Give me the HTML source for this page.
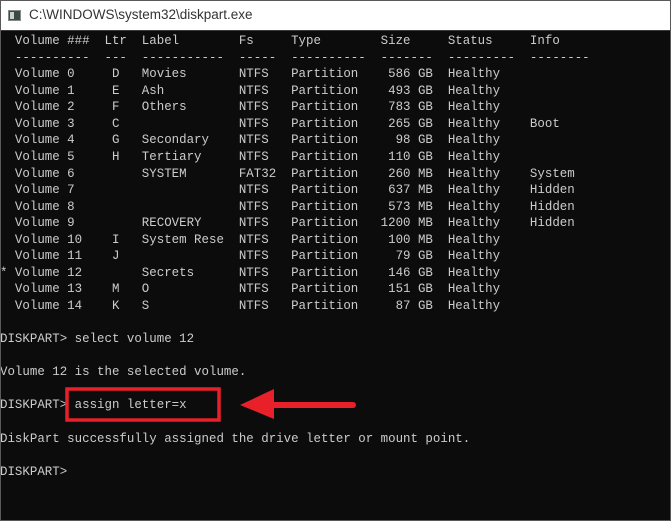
<!DOCTYPE html>
<html><head><meta charset="utf-8"><style>
html,body{margin:0;padding:0}
body{width:671px;height:521px;overflow:hidden;background:#0c0c0c;position:relative}
.frame{position:absolute;left:0;top:0;width:669px;height:519px;border:1px solid #5a5a5a;}
.title{position:absolute;left:0;top:0;width:671px;height:31px;background:#fff;border-bottom:1px solid #3a3a3a;box-sizing:border-box}
.title span{position:absolute;left:29px;top:7px;font:13.5px "Liberation Sans",sans-serif;color:#333}
.icon{position:absolute;left:8px;top:10px;width:13px;height:11px;background:#3a4a44;border:1px solid #888;box-sizing:border-box}
.icon:after{content:"";position:absolute;left:1px;top:1px;width:4px;height:7px;background:#c8d0cc}
pre{position:absolute;left:0;top:33px;margin:0;font-family:"Liberation Mono",monospace;font-size:12.44px;line-height:16.57px;color:#cccccc}
svg{position:absolute;left:0;top:0}
</style></head><body>
<div class="title"><div class="icon"></div><span>C:\WINDOWS\system32\diskpart.exe</span></div>
<pre>  Volume ###  Ltr  Label        Fs     Type        Size     Status     Info
  ----------  ---  -----------  -----  ----------  -------  ---------  --------
  Volume 0     D   Movies       NTFS   Partition    586 GB  Healthy
  Volume 1     E   Ash          NTFS   Partition    493 GB  Healthy
  Volume 2     F   Others       NTFS   Partition    783 GB  Healthy
  Volume 3     C                NTFS   Partition    265 GB  Healthy    Boot
  Volume 4     G   Secondary    NTFS   Partition     98 GB  Healthy
  Volume 5     H   Tertiary     NTFS   Partition    110 GB  Healthy
  Volume 6         SYSTEM       FAT32  Partition    260 MB  Healthy    System
  Volume 7                      NTFS   Partition    637 MB  Healthy    Hidden
  Volume 8                      NTFS   Partition    573 MB  Healthy    Hidden
  Volume 9         RECOVERY     NTFS   Partition   1200 MB  Healthy    Hidden
  Volume 10    I   System Rese  NTFS   Partition    100 MB  Healthy
  Volume 11    J                NTFS   Partition     79 GB  Healthy
* Volume 12        Secrets      NTFS   Partition    146 GB  Healthy
  Volume 13    M   O            NTFS   Partition    151 GB  Healthy
  Volume 14    K   S            NTFS   Partition     87 GB  Healthy

DISKPART&gt; select volume 12

Volume 12 is the selected volume.

DISKPART&gt; assign letter=x

DiskPart successfully assigned the drive letter or mount point.

DISKPART&gt;</pre>
<svg width="671" height="521">
<rect x="67" y="389" width="152" height="31" fill="none" stroke="#e8202a" stroke-width="3.5"/>
<line x1="268" y1="405" x2="353" y2="405" stroke="#e8202a" stroke-width="6" stroke-linecap="round"/>
<polygon points="240,405 274,389 274,419" fill="#e8202a"/>
</svg>
<div class="frame"></div>
</body></html>
